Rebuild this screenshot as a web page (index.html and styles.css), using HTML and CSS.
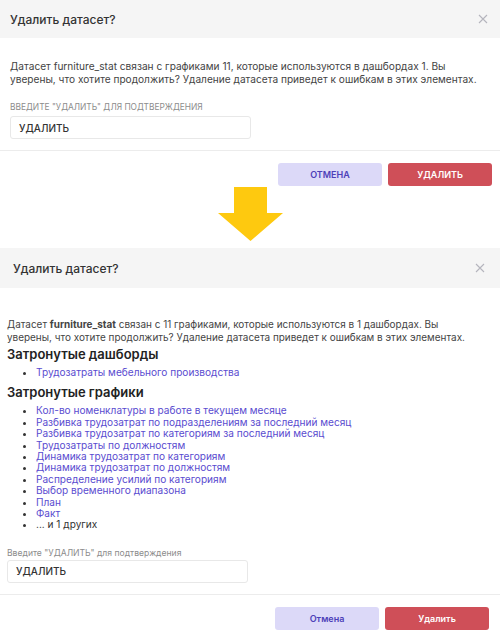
FILE: index.html
```html
<!DOCTYPE html>
<html lang="ru">
<head>
    <meta charset="UTF-8">
    <meta name="viewport" content="width=device-width, initial-scale=1.0">
    <title>Удалить датасет?</title>
    <link rel="stylesheet" href="styles.css">
</head>
<body>

<!-- Старый вариант окна -->
<div class="modal modal-old">
    <div class="modal-header">
        <span class="modal-title">Удалить датасет?</span>
        <span class="close">
            <svg width="10" height="10" viewBox="0 0 10 10"><path d="M1 1 L9 9 M9 1 L1 9" stroke="#b5b5bd" stroke-width="1.1"/></svg>
        </span>
    </div>
    <div class="modal-body">
        <p class="text">Датасет furniture_stat связан с графиками 11, которые используются в дашбордах 1. Вы уверены, что хотите продолжить? Удаление датасета приведет к ошибкам в этих элементах.</p>
        <div class="label">Введите "УДАЛИТЬ" для подтверждения</div>
        <div class="input">УДАЛИТЬ</div>
    </div>
    <div class="modal-footer">
        <button class="btn btn-cancel">Отмена</button>
        <button class="btn btn-delete">Удалить</button>
    </div>
</div>

<div class="arrow">
    <svg width="66" height="55" viewBox="0 0 66 55"><polygon points="16,0 49,0 49,26 65,26 32.5,54 0,26 16,26" fill="#fec90f"/></svg>
</div>

<!-- Новый вариант окна -->
<div class="modal modal-new">
    <div class="modal-header">
        <span class="modal-title">Удалить датасет?</span>
        <span class="close">
            <svg width="10" height="10" viewBox="0 0 10 10"><path d="M1 1 L9 9 M9 1 L1 9" stroke="#b5b5bd" stroke-width="1.1"/></svg>
        </span>
    </div>
    <div class="modal-body">
        <p class="text">Датасет <b>furniture_stat</b> связан с 11 графиками, которые используются в 1 дашбордах. Вы уверены, что хотите продолжить? Удаление датасета приведет к ошибкам в этих элементах.</p>
        <h4>Затронутые дашборды</h4>
        <ul>
            <li><a href="#">Трудозатраты мебельного производства</a></li>
        </ul>
        <h4>Затронутые графики</h4>
        <ul>
            <li><a href="#">Кол-во номенклатуры в работе в текущем месяце</a></li>
            <li><a href="#">Разбивка трудозатрат по подразделениям за последний месяц</a></li>
            <li><a href="#">Разбивка трудозатрат по категориям за последний месяц</a></li>
            <li><a href="#">Трудозатраты по должностям</a></li>
            <li><a href="#">Динамика трудозатрат по категориям</a></li>
            <li><a href="#">Динамика трудозатрат по должностям</a></li>
            <li><a href="#">Распределение усилий по категориям</a></li>
            <li><a href="#">Выбор временного диапазона</a></li>
            <li><a href="#">План</a></li>
            <li><a href="#">Факт</a></li>
            <li>... и 1 других</li>
        </ul>
        <div class="label">Введите "УДАЛИТЬ" для подтверждения</div>
        <div class="input">УДАЛИТЬ</div>
    </div>
    <div class="modal-footer">
        <button class="btn btn-cancel">Отмена</button>
        <button class="btn btn-delete">Удалить</button>
    </div>
</div>

</body>
</html>
```

FILE: styles.css
```css
body {
    margin: 0;
    font-family: Inter, "Noto Sans", sans-serif;
    background: white;
    color: #333;
}
.modal {
    background: white;
}
.modal-header {
    background-color: #f5f5f5;
    display: flex;
    align-items: center;
    justify-content: space-between;
}
.modal-title {
    font-size: 12px;
    font-weight: 500;
    color: #333;
}
.close {
    display: flex;
}
.text {
    margin: 0;
    font-size: 10.15px;
    line-height: 13px;
    color: #444;
}
.label {
    color: #8c8c8c;
}
.input {
    box-sizing: border-box;
    border: 1px solid #e8e8e8;
    border-radius: 3px;
    font-size: 10px;
    font-weight: 500;
    color: #333;
    display: flex;
    align-items: center;
}
.modal-footer {
    border-top: 1px solid #ececec;
    display: flex;
    justify-content: flex-end;
    gap: 6px;
}
.btn {
    border: none;
    border-radius: 3px;
    font-family: Inter, "Noto Sans", sans-serif;
    font-weight: 600;
    height: 23px;
    width: 104px;
    cursor: pointer;
}
.btn-cancel {
    background-color: #dcd9f8;
    color: #4d3fb8;
}
.btn-delete {
    background-color: #cf4f58;
    color: white;
}

/* верхнее окно */
.modal-old .modal-header {
    height: 38px;
    padding: 0 12px 0 10px;
}
.modal-old .modal-body {
    padding: 22px 10px 11px;
}
.modal-old .label {
    text-transform: uppercase;
    font-size: 8.4px;
    margin-top: 15px;
    line-height: 12px;
}
.modal-old .input {
    width: 241px;
    height: 23px;
    margin-top: 3px;
    padding-left: 8px;
}
.modal-old .modal-footer {
    padding: 12px 8px 0;
}
.modal-old .btn {
    font-size: 9px;
    text-transform: uppercase;
}

.arrow {
    display: flex;
    justify-content: center;
    padding: 1px 0 6px 1px;
}
.arrow svg {
    display: block;
}

/* нижнее окно */
.modal-new .modal-header {
    height: 40px;
    padding: 0 15px 0 13px;
}
.modal-new .modal-body {
    padding: 30px 7px 11px;
}
.modal-new .text {
    font-size: 9.95px;
    max-width: 465px;
}
.modal-new h4 {
    margin: 1px 0 0;
    font-size: 13px;
    font-weight: 600;
    line-height: 18px;
    color: #222;
}
.modal-new ul + h4 {
    margin-top: 5px;
}
.modal-new ul {
    margin: 4px 0 0;
    padding-left: 29px;
    font-size: 10.1px;
    line-height: 11.4px;
}
.modal-new a {
    color: #5a4cd0;
    text-decoration: none;
}
.modal-new .label {
    margin-top: 16px;
    font-size: 8.6px;
    line-height: 12px;
}
.modal-new .input {
    width: 241px;
    height: 23px;
    margin-top: 1px;
    padding-left: 8px;
}
.modal-new .modal-footer {
    padding: 12px 11px 0;
}
.modal-new .btn {
    font-size: 9px;
}
```
